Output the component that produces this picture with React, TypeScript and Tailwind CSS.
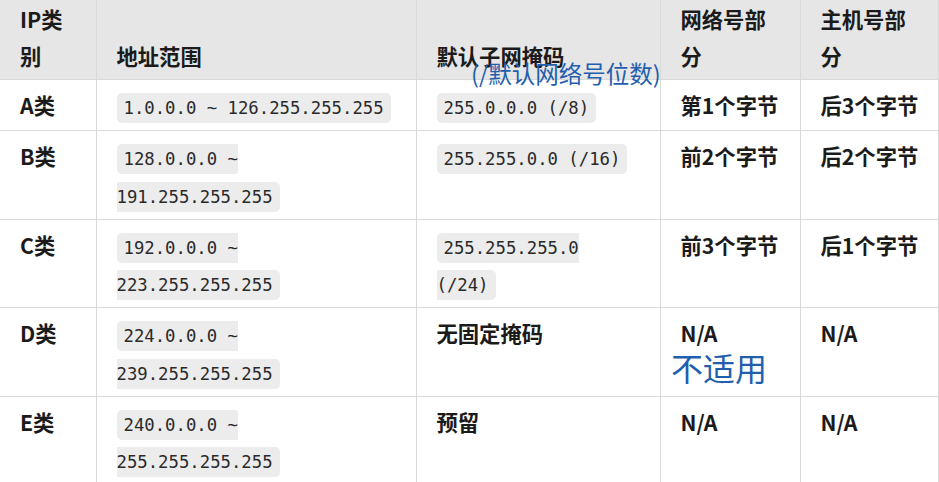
import React from "react";

const cjk = { fontFamily: '"Noto Sans CJK SC", "Noto Sans", sans-serif' };

function Code({ children }: { children: React.ReactNode }) {
  return (
    <code className="rounded-[5px] bg-[#ececec] px-[7px] py-[5px] text-[17.3px] font-normal leading-none text-[#2a2a2a] [font-family:'DejaVu_Sans_Mono',monospace]">
      {children}
    </code>
  );
}

const rows: { c: string; range: string; mask: React.ReactNode; net: string; host: string }[] = [
  { c: "A类", range: "1.0.0.0 ~ 126.255.255.255", mask: <Code>255.0.0.0 (/8)</Code>, net: "第1个字节", host: "后3个字节" },
  { c: "B类", range: "128.0.0.0 ~ 191.255.255.255", mask: <Code>255.255.0.0 (/16)</Code>, net: "前2个字节", host: "后2个字节" },
  { c: "C类", range: "192.0.0.0 ~ 223.255.255.255", mask: <Code>255.255.255.0 (/24)</Code>, net: "前3个字节", host: "后1个字节" },
  { c: "D类", range: "224.0.0.0 ~ 239.255.255.255", mask: "无固定掩码", net: "N/A", host: "N/A" },
  { c: "E类", range: "240.0.0.0 ~ 255.255.255.255", mask: "预留", net: "N/A", host: "N/A" },
];

export default function App() {
  const th = "border-b border-r border-[#d9d9d9] bg-[#e6e6e6] pl-[20px] pr-[16px] pt-0 pb-[5px] text-left align-bottom font-bold leading-[37px]";
  const td = "border-b border-r border-[#d9d9d9] pl-[20px] pr-[16px] py-[6.25px] align-top font-bold leading-[37.5px]";
  return (
    <div className="relative h-[482px] w-[939px] overflow-hidden bg-white text-[21.3px] text-[#1b1b1b]" style={cjk}>
      <table className="w-[938px] table-fixed border-collapse">
        <colgroup>
          <col className="w-[96px]" />
          <col className="w-[320px]" />
          <col className="w-[244px]" />
          <col className="w-[140px]" />
          <col className="w-[138px]" />
        </colgroup>
        <thead>
          <tr>
            <th className={th + " pl-[18px]"}>IP类别</th>
            <th className={th}>地址范围</th>
            <th className={th}>默认子网掩码</th>
            <th className={th}>网络号部分</th>
            <th className={th}>主机号部分</th>
          </tr>
        </thead>
        <tbody>
          {rows.map((r) => (
            <tr key={r.c}>
              <td className={td + " pl-[18px]"}>{r.c}</td>
              <td className={td}>
                <Code>{r.range}</Code>
              </td>
              <td className={td}>{r.mask}</td>
              <td className={td}>{r.net}</td>
              <td className={td}>{r.host}</td>
            </tr>
          ))}
        </tbody>
      </table>
      <div className="absolute left-[471px] top-[58px] text-[23.5px] leading-[30px] text-[#1f5fae]">(/默认网络号位数)</div>
      <div className="absolute left-[671px] top-[345px] text-[32px] leading-[44px] text-[#1f5fae]">不适用</div>
    </div>
  );
}
